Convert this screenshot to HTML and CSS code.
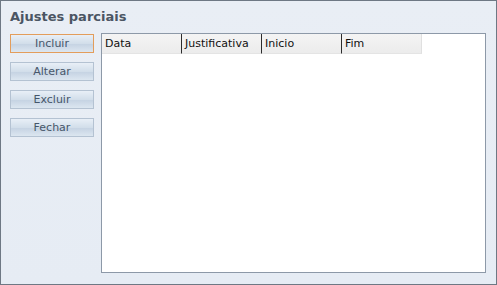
FILE: index.html
```html
<!DOCTYPE html>
<html lang="pt">
<head>
    <meta charset="UTF-8">
    <title>Ajustes parciais</title>
    <link rel="stylesheet" href="styles.css">
</head>
<body>
    <div class="panel">
        <div class="panel-title">Ajustes parciais</div>
        <div class="panel-body">
            <div class="actions">
                <button class="btn btn-focus">Incluir</button>
                <button class="btn">Alterar</button>
                <button class="btn">Excluir</button>
                <button class="btn">Fechar</button>
            </div>
            <div class="grid">
                <div class="grid-head">
                    <div class="col">Data</div>
                    <div class="col">Justificativa</div>
                    <div class="col">Inicio</div>
                    <div class="col">Fim</div>
                </div>
            </div>
        </div>
    </div>
</body>
</html>
```

FILE: styles.css
```css
body {
    margin: 0;
    font-family: 'DejaVu Sans', sans-serif;
}

.panel {
    width: 497px;
    height: 285px;
    box-sizing: border-box;
    border: 1px solid #6e7884;
    background: linear-gradient(to bottom, #e9eef5, #e6ecf4);
    padding: 7px 10px 11px 9px;
    display: flex;
    flex-direction: column;
}

.panel-title {
    font-size: 13px;
    font-weight: bold;
    color: #4b5563;
    height: 25px;
    line-height: 18px;
}

.panel-body {
    flex: 1;
    display: flex;
    gap: 7px;
}

.actions {
    display: flex;
    flex-direction: column;
    gap: 9px;
    width: 84px;
    padding-top: 1px;
}

.btn {
    height: 19px;
    padding: 0;
    border: 1px solid #b4c2d2;
    background: linear-gradient(to bottom, #e8eff7 0%, #d2deea 50%, #c4d2e2 51%, #dce6f0 100%);
    font-family: 'DejaVu Sans', sans-serif;
    font-size: 11px;
    color: #46566a;
    cursor: pointer;
}

.btn-focus {
    border-color: #e39d5b;
}

.grid {
    flex: 1;
    background: #fff;
    border: 1px solid #8d99a8;
}

.grid-head {
    display: flex;
    height: 20px;
}

.col {
    width: 80px;
    box-sizing: border-box;
    border-right: 1px solid #2c2c2c;
    border-bottom: 1px solid #e4e4e4;
    background: linear-gradient(to bottom, #f4f4f4, #ececec);
    font-size: 11px;
    line-height: 20px;
    padding-left: 3px;
    color: #111;
}

.col:last-child {
    border-right: 1px solid #e0e0e0;
}
```
